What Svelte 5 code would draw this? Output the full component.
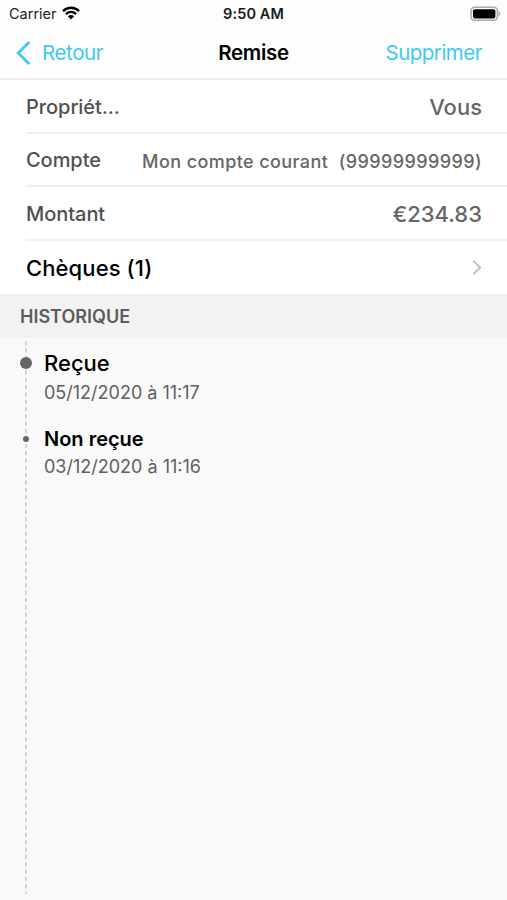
<script>
 const rows = [
  { label: 'Propriét...', value: 'Vous', kind: 'owner' },
  { label: 'Compte', value: 'Mon compte courant  (99999999999)', kind: 'account' },
  { label: 'Montant', value: '€234.83', kind: 'amount' }
 ];

 const history = [
  { status: 'Reçue', date: '05/12/2020 à 11:17', current: true },
  { status: 'Non reçue', date: '03/12/2020 à 11:16', current: false }
 ];
</script>

<div class="screen">
 <header>
  <div class="status">
   <div class="carrier">
    <span>Carrier</span>
    <svg width="18" height="14" viewBox="0 0 18 14">
     <path d="M1 5.1C5.6.7 12.4.7 17 5.1" />
     <path d="M3.9 8.1c3-2.8 7.2-2.8 10.2 0" />
     <path class="fill" d="M5.9 10.2c1.9-1.6 4.3-1.6 6.2 0L9 13.4z" />
    </svg>
   </div>
   <span class="time">9:50 AM</span>
   <svg class="battery" width="32" height="16" viewBox="0 0 32 16">
    <rect class="shell" x="1" y="1.2" width="26.4" height="13" rx="3.6" />
    <rect class="charge" x="3" y="3.2" width="22.4" height="9.2" rx="1.8" />
    <path class="tip" d="M28.6 5.2c2.4 1 2.4 4 0 5z" />
   </svg>
  </div>
  <nav>
   <button class="back">
    <svg width="16" height="26" viewBox="0 0 16 26"><path d="M14.3 2 3.2 13l11.1 11" /></svg>
    <span>Retour</span>
   </button>
   <h1>Remise</h1>
   <button class="delete">Supprimer</button>
  </nav>
 </header>

 <section class="details">
  {#each rows as row}
   <div class="row">
    <span class="label {row.kind}">{row.label}</span>
    <span class="value {row.kind}">{row.value}</span>
   </div>
  {/each}
  <div class="row link">
   <span class="label">Chèques (1)</span>
   <svg width="10" height="17" viewBox="0 0 10 17"><path d="m1.2 1.7 7 6.8-7 6.8" /></svg>
  </div>
 </section>

 <h2>HISTORIQUE</h2>

 <section class="history">
  <svg class="line" width="2" height="553"><line x1="1" y1="0" x2="1" y2="553" /></svg>
  {#each history as item}
   <div class="event" class:current={item.current}>
    <i class="dot"></i>
    <div class="status-name">{item.status}</div>
    <div class="date">{item.date}</div>
   </div>
  {/each}
 </section>
</div>

<style>
 :global(body) {
  background: #f9f9f9;
 }

 .screen {
  width: 507px;
  height: 900px;
  overflow: hidden;
  display: flex;
  flex-direction: column;
  background: #f9f9f9;
  font-family: Inter, "Liberation Sans", sans-serif;
  color: #000;
 }

 svg {
  display: block;
  flex: none;
  fill: none;
 }

 header {
  box-sizing: border-box;
  height: 80px;
  background: #fdfdfd;
  border-bottom: 2px solid #ececec;
 }

 .status {
  display: grid;
  grid-template-columns: 1fr auto 1fr;
  align-items: center;
  height: 27px;
  padding: 0 9px;
  font-size: 14.5px;
  line-height: 27px;
 }

 .carrier {
  display: flex;
  align-items: center;
  gap: 5px;
  color: #222;
 }

 .carrier svg {
  stroke: #000;
  stroke-width: 2.4;
  margin-top: -2px;
 }

 .carrier .fill {
  fill: #000;
  stroke: none;
 }

 .time {
  font-weight: 600;
  letter-spacing: 0.12px;
  color: #1a1a1a;
 }

 .battery {
  justify-self: end;
  margin-right: -4px;
 }

 .shell {
  stroke: #aaa;
  stroke-width: 1.6;
 }

 .charge {
  fill: #000;
 }

 .tip {
  fill: #aaa;
 }

 nav {
  display: grid;
  grid-template-columns: 1fr auto 1fr;
  align-items: center;
  height: 51px;
  padding: 0 25px;
 }

 button {
  padding: 0;
  border: 0;
  background: none;
  font: inherit;
  font-size: 20.5px;
  line-height: 26px;
  letter-spacing: -0.4px;
  color: #42c8f5;
 }

 .back {
  display: flex;
  align-items: center;
  gap: 11px;
  justify-self: start;
  margin-left: -10px;
 }

 .back svg {
  stroke: #42c8f5;
  stroke-width: 2.8;
 }

 .delete {
  justify-self: end;
  letter-spacing: -0.5px;
 }

 h1 {
  margin: 0;
  font-size: 20.5px;
  font-weight: 600;
  line-height: 26px;
  letter-spacing: -0.3px;
 }

 .details {
  background: #fff;
  padding-left: 26px;
 }

 .row {
  box-sizing: border-box;
  display: flex;
  align-items: center;
  justify-content: space-between;
  height: 53.6px;
  padding: 2px 25px 0 0;
  border-bottom: 2px solid #f0f0f0;
 }

 .label {
  font-size: 20px;
  font-weight: 500;
  letter-spacing: -0.05px;
  color: #505050;
 }

 .value {
  font-size: 22px;
  font-weight: 500;
  color: #666;
  white-space: pre;
 }

 .value.account {
  font-size: 18px;
  letter-spacing: 0.41px;
  padding-top: 2px;
 }

 .link {
  border-bottom: 0;
  padding-top: 0;
 }

 .link .label {
  font-size: 22px;
  letter-spacing: 0.1px;
  color: #000;
 }

 .link svg {
  stroke: #c2c2c2;
  stroke-width: 2;
 }

 h2 {
  margin: 0;
  height: 44px;
  padding-left: 20px;
  background: #f2f2f2;
  font-size: 18px;
  font-weight: 600;
  line-height: 45px;
  color: #5c5c5c;
 }

 .history {
  position: relative;
  flex: 1;
  padding: 12px 0 0 44px;
 }

 .line {
  position: absolute;
  left: 24.5px;
  top: 3px;
 }

 .line line {
  stroke: #c9c9c9;
  stroke-width: 1.6;
  stroke-dasharray: 4.2 3.14;
 }

 .event {
  position: relative;
  height: 75px;
 }

 .status-name {
  font-size: 20px;
  font-weight: 600;
  line-height: 28px;
 }

 .current .status-name {
  font-size: 22px;
  font-weight: 500;
  line-height: 27px;
 }

 .date {
  font-size: 18px;
  line-height: 28px;
  color: #606060;
 }

 .current .date {
  padding-top: 2px;
 }

 .dot {
  position: absolute;
  left: -21px;
  top: 11px;
  width: 6px;
  height: 6px;
  border-radius: 50%;
  background: #666;
 }

 .current .dot {
  left: -24px;
  top: 7px;
  width: 12px;
  height: 12px;
 }
</style>
